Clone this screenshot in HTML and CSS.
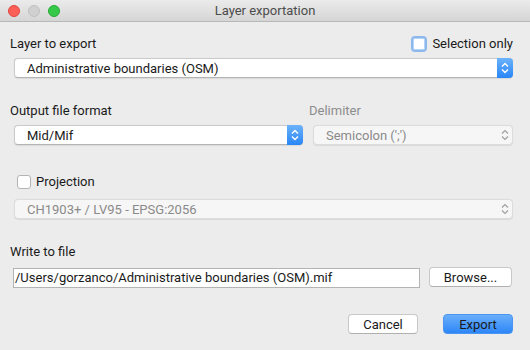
FILE: index.html
```html
<!DOCTYPE html>
<html lang="en">
<head>
<meta charset="UTF-8" />
<title>Layer exportation</title>
<link rel="stylesheet" href="styles.css">
</head>
<body>

<div class="window">
  <div class="titlebar">
    <div class="lights">
      <span class="light red"></span>
      <span class="light gray"></span>
      <span class="light green"></span>
    </div>
    <div class="title">Layer exportation</div>
  </div>

  <div class="dialog">
    <div class="head-row">
      <span class="label">Layer to export</span>
      <label class="check-label">
        <span class="check focus"></span>
        Selection only
      </label>
    </div>
    <div class="combo full">
      <span class="combo-text">Administrative boundaries (OSM)</span>
      <span class="stepper">
        <svg width="16" height="20" viewBox="0 0 16 20"><path d="M5 8.5 L8 5.5 L11 8.5 M5 11.5 L8 14.5 L11 11.5" fill="none" stroke="#fff" stroke-width="1.4"/></svg>
      </span>
    </div>

    <div class="split">
      <div class="col left">
        <div class="label">Output file format</div>
        <div class="combo">
          <span class="combo-text">Mid/Mif</span>
          <span class="stepper">
            <svg width="16" height="20" viewBox="0 0 16 20"><path d="M5 8.5 L8 5.5 L11 8.5 M5 11.5 L8 14.5 L11 11.5" fill="none" stroke="#fff" stroke-width="1.4"/></svg>
          </span>
        </div>
      </div>
      <div class="col right">
        <div class="label muted">Delimiter</div>
        <div class="combo disabled">
          <span class="combo-text">Semicolon (';')</span>
          <span class="stepper plain">
            <svg width="16" height="20" viewBox="0 0 16 20"><path d="M5 8.5 L8 5.5 L11 8.5 M5 11.5 L8 14.5 L11 11.5" fill="none" stroke="#a0a0a0" stroke-width="1.2"/></svg>
          </span>
        </div>
      </div>
    </div>

    <label class="check-label proj">
      <span class="check small"></span>
      Projection
    </label>
    <div class="combo full disabled">
      <span class="combo-text">CH1903+ / LV95 - EPSG:2056</span>
      <span class="stepper plain">
        <svg width="16" height="20" viewBox="0 0 16 20"><path d="M5 8.5 L8 5.5 L11 8.5 M5 11.5 L8 14.5 L11 11.5" fill="none" stroke="#a0a0a0" stroke-width="1.2"/></svg>
      </span>
    </div>

    <div class="label write">Write to file</div>
    <div class="file-row">
      <div class="field">/Users/gorzanco/Administrative boundaries (OSM).mif</div>
      <button class="btn browse">Browse...</button>
    </div>

    <div class="actions">
      <button class="btn">Cancel</button>
      <button class="btn primary">Export</button>
    </div>
  </div>
</div>

</body>
</html>
```

FILE: styles.css
```css
body {
  margin: 0;
  font-family: Roboto, "Liberation Sans", sans-serif;
  font-size: 13px;
  color: #1a1a1a;
  background: #ececec;
}
.window {
  width: 530px;
  height: 350px;
  background: #ececec;
  overflow: hidden;
}
.titlebar {
  position: relative;
  height: 21px;
  background: linear-gradient(#ebebeb, #d5d5d5);
  border-bottom: 1px solid #b8b8b8;
}
.lights {
  position: absolute;
  left: 8px;
  top: 5px;
  display: flex;
  gap: 8px;
}
.light {
  width: 12px;
  height: 12px;
  border-radius: 50%;
  box-sizing: border-box;
}
.red { background: #fc5f57; border: 1px solid #e0443e; }
.gray { background: #d0d0d0; border: 1px solid #c0c0c0; }
.green { background: #35c94a; border: 1px solid #27aa35; }
.title {
  text-align: center;
  line-height: 21px;
  color: #4c4c4c;
}
.dialog {
  padding: 0 17px 0 10px;
}
.label {
  line-height: 16px;
}
.muted {
  color: #8c8c8c;
}
.head-row {
  margin-top: 14px;
  height: 16px;
  display: flex;
  justify-content: space-between;
  align-items: center;
}
.check-label {
  display: flex;
  align-items: center;
  gap: 5px;
  line-height: 16px;
}
.check {
  width: 16px;
  height: 16px;
  box-sizing: border-box;
  background: #fff;
  border-radius: 4px;
}
.check.focus {
  border: 2px solid #8cb8ee;
  box-shadow: inset 0 0 0 1px #b7d3f5;
}
.check.small {
  width: 14px;
  height: 14px;
  border: 1px solid #b4b4b4;
  border-radius: 3px;
}
.combo {
  display: flex;
  align-items: center;
  height: 20px;
  margin-left: 4px;
  box-sizing: border-box;
  background: #fff;
  border: 1px solid #cacaca;
  border-bottom-color: #b4b4b4;
  border-radius: 4px;
  box-shadow: 0 0.5px 1px rgba(0,0,0,0.08);
}
.combo-text {
  flex: 1;
  padding-left: 12px;
  white-space: nowrap;
}
.stepper {
  width: 16px;
  height: 20px;
  margin: -1px -1px -1px 0;
  border-radius: 0 4px 4px 0;
  background: linear-gradient(#6bb2fb, #2a86f6);
  display: flex;
}
.stepper.plain {
  background: none;
}
.combo.full {
  margin-top: 6px;
}
.combo.disabled {
  background: #f6f6f6;
  border-color: #dcdcdc;
  color: #8a8a8a;
}
.split {
  display: flex;
  margin-top: 25px;
}
.col.left {
  width: 293px;
}
.col.right {
  flex: 1;
  margin-left: 6px;
}
.col .combo {
  margin-top: 6px;
}
.proj {
  margin-top: 29px;
  padding-left: 7px;
}
.proj + .combo.full {
  margin-top: 9px;
}
.write {
  margin-top: 25px;
}
.file-row {
  display: flex;
  align-items: flex-start;
  margin-top: 7px;
}
.field {
  width: 407px;
  height: 20px;
  margin: 1px 0 0 3px;
  box-sizing: border-box;
  background: #fff;
  border: 1px solid #b4b4b4;
  padding-left: 1px;
  line-height: 18px;
  white-space: nowrap;
}
.btn {
  font-family: inherit;
  font-size: 13px;
  color: #1a1a1a;
  height: 20px;
  width: 70px;
  padding: 0;
  background: #fff;
  border: 1px solid #c8c8c8;
  border-bottom-color: #b0b0b0;
  border-radius: 4px;
}
.btn.browse {
  width: 83px;
  margin-left: 9px;
}
.actions {
  display: flex;
  justify-content: flex-end;
  gap: 25px;
  margin-top: 26px;
}
.btn.primary {
  background: linear-gradient(#6aaffb, #2d86f7);
  border-color: #4a94f2;
}
```
